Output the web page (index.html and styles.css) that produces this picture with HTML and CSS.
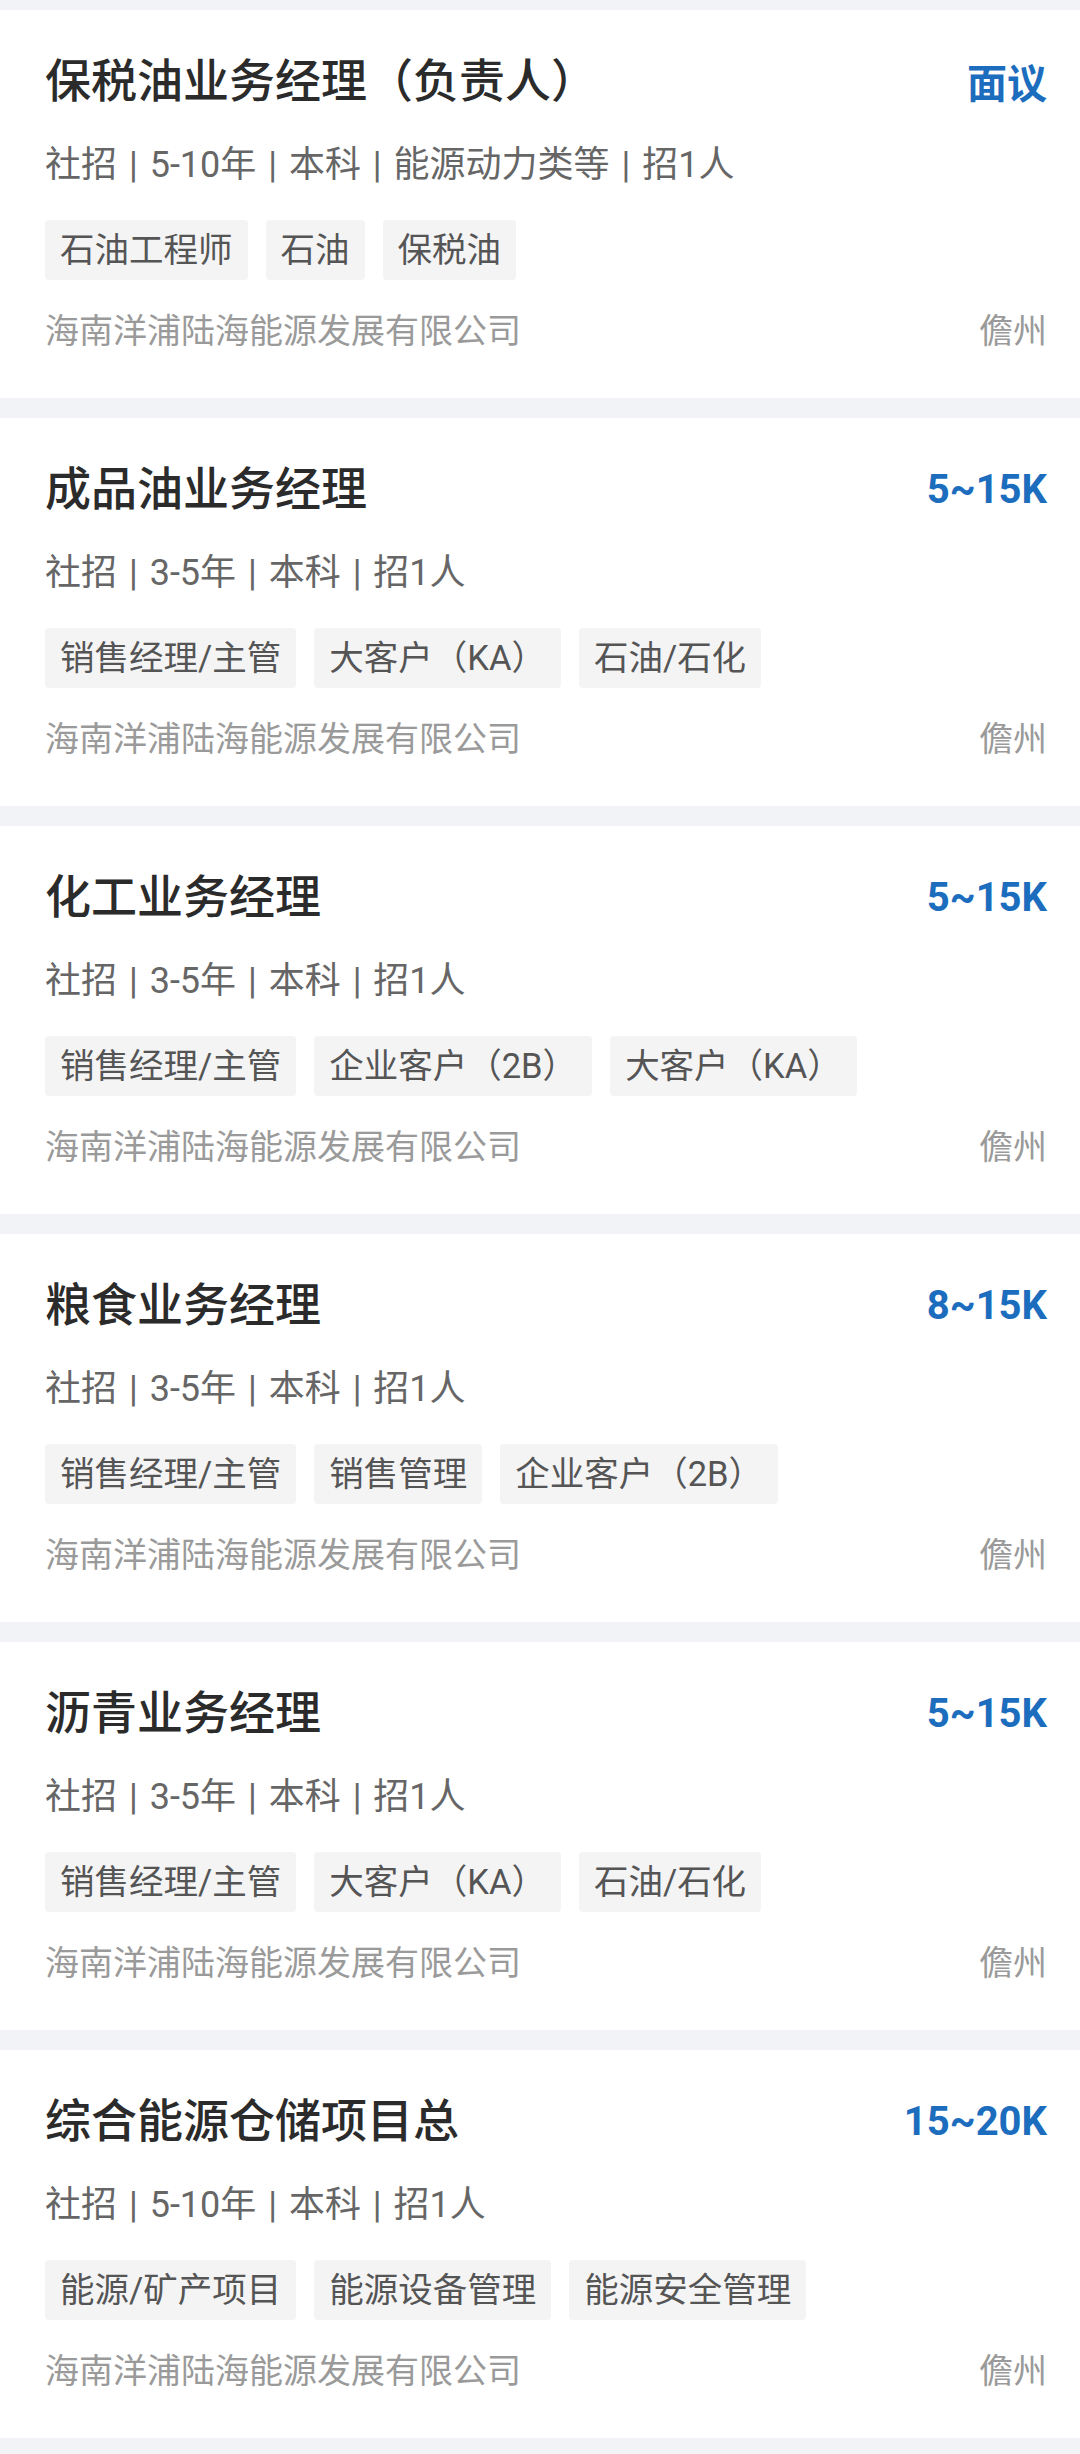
FILE: index.html
```html
<!DOCTYPE html>
<html lang="zh-CN">
<head>
  <meta charset="UTF-8">
  <meta name="viewport" content="width=device-width, initial-scale=1.0">
  <title>职位列表</title>
  <link rel="stylesheet" href="styles.css">
</head>
<body>
  <main class="job-list">
    <!-- 职位 1 -->
    <section class="job-card">
      <div class="job-head">
        <h2 class="job-title">保税油业务经理（负责人）</h2>
        <span class="job-salary">面议</span>
      </div>
      <p class="job-meta">社招 | 5-10年 | 本科 | 能源动力类等 | 招1人</p>
      <div class="job-tags">
        <span class="tag">石油工程师</span>
        <span class="tag">石油</span>
        <span class="tag">保税油</span>
      </div>
      <div class="job-foot">
        <span class="company">海南洋浦陆海能源发展有限公司</span>
        <span class="city">儋州</span>
      </div>
    </section>

    <!-- 职位 2 -->
    <section class="job-card">
      <div class="job-head">
        <h2 class="job-title">成品油业务经理</h2>
        <span class="job-salary">5~15K</span>
      </div>
      <p class="job-meta">社招 | 3-5年 | 本科 | 招1人</p>
      <div class="job-tags">
        <span class="tag">销售经理/主管</span>
        <span class="tag">大客户（KA）</span>
        <span class="tag">石油/石化</span>
      </div>
      <div class="job-foot">
        <span class="company">海南洋浦陆海能源发展有限公司</span>
        <span class="city">儋州</span>
      </div>
    </section>

    <!-- 职位 3 -->
    <section class="job-card">
      <div class="job-head">
        <h2 class="job-title">化工业务经理</h2>
        <span class="job-salary">5~15K</span>
      </div>
      <p class="job-meta">社招 | 3-5年 | 本科 | 招1人</p>
      <div class="job-tags">
        <span class="tag">销售经理/主管</span>
        <span class="tag">企业客户（2B）</span>
        <span class="tag">大客户（KA）</span>
      </div>
      <div class="job-foot">
        <span class="company">海南洋浦陆海能源发展有限公司</span>
        <span class="city">儋州</span>
      </div>
    </section>

    <!-- 职位 4 -->
    <section class="job-card">
      <div class="job-head">
        <h2 class="job-title">粮食业务经理</h2>
        <span class="job-salary">8~15K</span>
      </div>
      <p class="job-meta">社招 | 3-5年 | 本科 | 招1人</p>
      <div class="job-tags">
        <span class="tag">销售经理/主管</span>
        <span class="tag">销售管理</span>
        <span class="tag">企业客户（2B）</span>
      </div>
      <div class="job-foot">
        <span class="company">海南洋浦陆海能源发展有限公司</span>
        <span class="city">儋州</span>
      </div>
    </section>

    <!-- 职位 5 -->
    <section class="job-card">
      <div class="job-head">
        <h2 class="job-title">沥青业务经理</h2>
        <span class="job-salary">5~15K</span>
      </div>
      <p class="job-meta">社招 | 3-5年 | 本科 | 招1人</p>
      <div class="job-tags">
        <span class="tag">销售经理/主管</span>
        <span class="tag">大客户（KA）</span>
        <span class="tag">石油/石化</span>
      </div>
      <div class="job-foot">
        <span class="company">海南洋浦陆海能源发展有限公司</span>
        <span class="city">儋州</span>
      </div>
    </section>

    <!-- 职位 6 -->
    <section class="job-card">
      <div class="job-head">
        <h2 class="job-title">综合能源仓储项目总</h2>
        <span class="job-salary">15~20K</span>
      </div>
      <p class="job-meta">社招 | 5-10年 | 本科 | 招1人</p>
      <div class="job-tags">
        <span class="tag">能源/矿产项目</span>
        <span class="tag">能源设备管理</span>
        <span class="tag">能源安全管理</span>
      </div>
      <div class="job-foot">
        <span class="company">海南洋浦陆海能源发展有限公司</span>
        <span class="city">儋州</span>
      </div>
    </section>
  </main>
</body>
</html>
```

FILE: styles.css
```css
body {
  margin: 0;
  background-color: #f2f3f7;
  font-family: Roboto, "Noto Sans CJK SC", sans-serif;
  color: #333;
}
.job-list {
  display: flex;
  flex-direction: column;
  gap: 20px;
  padding-top: 10px;
}
.job-card {
  background-color: #fff;
  height: 388px;
  box-sizing: border-box;
  padding: 43px 33px 0 45px;
}
.job-head {
  display: flex;
  justify-content: space-between;
  align-items: center;
  height: 56px;
}
.job-title {
  margin: 0;
  font-size: 46px;
  line-height: 56px;
  font-weight: 500;
  color: #2b2b2b;
}
.job-salary {
  font-size: 40px;
  font-weight: 700;
  color: #1c6dbd;
}
.job-meta {
  margin: 32px 0 0;
  font-size: 36px;
  line-height: 48px;
  word-spacing: 3px;
  color: #666;
}
.job-tags {
  display: flex;
  gap: 18px;
  margin-top: 31px;
}
.tag {
  background-color: #f4f4f5;
  border-radius: 4px;
  padding: 0 15px;
  font-size: 34.5px;
  line-height: 60px;
  color: #555;
}
.job-foot {
  display: flex;
  justify-content: space-between;
  margin-top: 28px;
  font-size: 34px;
  line-height: 46px;
  color: #9a9a9a;
}
```
